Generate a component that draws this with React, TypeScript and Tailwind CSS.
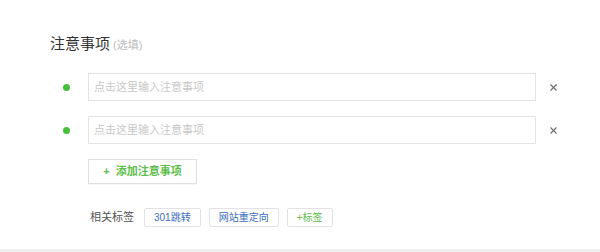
import { X } from 'lucide-react';

const tags = [
  { label: '301跳转', color: 'text-[#3b6cc0]' },
  { label: '网站重定向', color: 'text-[#3b6cc0]' },
  { label: '+标签', color: 'text-[#5cbd4a]' },
];

function NoteRow() {
  return (
    <div className="flex items-center">
      <div className="w-[38px] shrink-0 flex">
        <span className="ml-[13px] w-[7px] h-[7px] rounded-full bg-[#46bf3a]" />
      </div>
      <input
        className="w-[448px] shrink-0 h-[28px] border border-[#e3e3e3] px-[5px] text-[11px] text-[#333] placeholder:text-[#c8c8c8] outline-none"
        placeholder="点击这里输入注意事项"
      />
      <button className="ml-[12px] shrink-0 text-[#707070]">
        <X className="w-[11px] h-[11px]" strokeWidth={2.5} />
      </button>
    </div>
  );
}

export default function App() {
  return (
    <div
      className="w-[600px] h-[252px] bg-white flex flex-col"
      style={{ fontFamily: '"Liberation Sans", "Noto Sans CJK SC", sans-serif' }}
    >
      <div className="px-[50px] pt-[34px] flex flex-col">
        {/* Header */}
        <div className="flex items-baseline h-[20px]">
          <h2 className="text-[15px] leading-[20px] text-[#333]">注意事项</h2>
          <span className="ml-[3px] text-[11px] text-[#bbb]">(选填)</span>
        </div>

        {/* Rows */}
        <div className="mt-[19px] flex flex-col gap-[15px]">
          <NoteRow />
          <NoteRow />
        </div>

        <button className="mt-[15px] ml-[38px] w-[109px] h-[25px] border border-[#e0e0e0] bg-white text-[11px] font-bold text-[#5cbd4a] shadow-[0_1px_1px_rgba(0,0,0,0.04)]">
          +&nbsp;&nbsp;添加注意事项
        </button>

        {/* Tags */}
        <div className="mt-[24px] ml-[40px] flex items-center">
          <span className="text-[11px] text-[#555] mr-[10px]">相关标签</span>
          <div className="flex gap-[8px]">
            {tags.map((t) => (
              <span
                key={t.label}
                className={`h-[19px] px-[9px] flex items-center border border-[#e2e2e2] rounded-[2px] text-[10px] ${t.color}`}
              >
                {t.label}
              </span>
            ))}
          </div>
        </div>
      </div>
      <div className="mt-auto h-[3px] bg-[#f0f0f0]" />
    </div>
  );
}
